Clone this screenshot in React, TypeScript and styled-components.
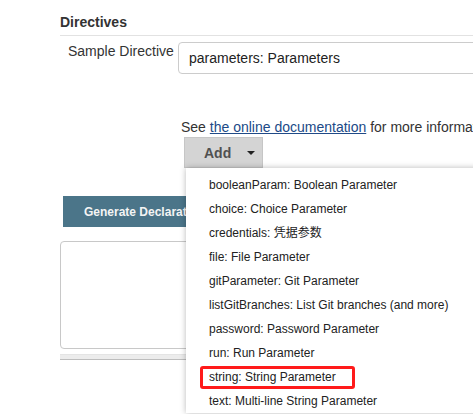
import React from "react";
import styled, { createGlobalStyle } from "styled-components";

const GlobalStyle = createGlobalStyle`
  html, body {
    margin: 0;
    padding: 0;
    background: #ffffff;
  }
  body {
    font-family: "Liberation Sans", Arial, "Noto Sans CJK SC", sans-serif;
    color: #333333;
    overflow: hidden;
  }
`;

const Page = styled.div`
  position: relative;
  width: 473px;
  height: 414px;
  overflow: hidden;
  padding-left: 60px;
  box-sizing: border-box;
`;

const Heading = styled.h3`
  margin: 12px -20px 0 0;
  padding-bottom: 3px;
  font-size: 14px;
  font-weight: bold;
  line-height: 20px;
  color: #333333;
  border-bottom: 1px solid #e2e2e2;
`;

const FieldRow = styled.div`
  display: flex;
  align-items: flex-start;
  padding-top: 6px;
`;

const Label = styled.label`
  box-sizing: border-box;
  width: 118px;
  flex: none;
  padding-left: 8px;
  font-size: 14px;
  line-height: 18px;
  color: #333333;
  white-space: nowrap;
`;

const SelectBox = styled.div`
  box-sizing: border-box;
  flex: none;
  width: 420px;
  height: 32px;
  display: flex;
  align-items: center;
  padding-left: 10px;
  border: 1px solid #cccccc;
  border-radius: 4px 0 0 4px;
  font-size: 14px;
  color: #222222;
  background: #ffffff;
`;

const Help = styled.div`
  margin-top: 43px;
  padding-left: 121px;
  font-size: 14px;
  line-height: 20px;
  color: #333333;
  white-space: nowrap;
`;

const DocLink = styled.a`
  color: #204a87;
  text-decoration: underline;
`;

const AddWrap = styled.div`
  position: relative;
  margin-left: 124px;
  width: 79px;
`;

const AddButton = styled.button`
  box-sizing: border-box;
  width: 79px;
  height: 31px;
  display: flex;
  align-items: center;
  padding: 0 0 0 19px;
  background: #d4d4d4;
  border: 1px solid #c6c6c6;
  border-radius: 0;
  font-family: "Liberation Sans", Arial, sans-serif;
  font-size: 14px;
  font-weight: bold;
  color: #505050;
  cursor: pointer;
`;

const Caret = styled.span`
  width: 0;
  height: 0;
  margin-left: 16px;
  margin-top: 1px;
  border-left: 4px solid transparent;
  border-right: 4px solid transparent;
  border-top: 4px solid #222222;
`;

const Menu = styled.ul`
  position: absolute;
  top: 31px;
  left: 2px;
  width: 320px;
  margin: 0;
  padding: 5px 0 0 0;
  list-style: none;
  background: #ffffff;
  box-shadow: 0 0 6px rgba(0, 0, 0, 0.28);
  z-index: 5;
`;

const MenuItem = styled.li`
  position: relative;
  padding-left: 23px;
  font-size: 12px;
  line-height: 24px;
  color: #222222;
  white-space: nowrap;
`;

const Highlight = styled.span`
  position: absolute;
  left: 14px;
  top: 1px;
  width: 155px;
  height: 23px;
  box-sizing: border-box;
  border: 3px solid #ff1a1a;
  border-radius: 3px;
`;

const GenerateButton = styled.button`
  display: block;
  box-sizing: border-box;
  margin: 28px 0 0 3px;
  height: 31px;
  padding: 0 21px;
  background: #4b7589;
  border: none;
  border-radius: 0;
  font-family: "Liberation Sans", Arial, sans-serif;
  font-size: 12px;
  font-weight: bold;
  color: #f4f4f4;
  white-space: nowrap;
`;

const OutputArea = styled.div`
  box-sizing: border-box;
  margin-top: 14px;
  height: 108px;
  width: 200px;
  border: 1px solid #c8c8c8;
  border-radius: 4px;
  background: #ffffff;
`;

const ResizeBar = styled.div`
  box-sizing: border-box;
  margin-top: 5px;
  width: 200px;
  height: 6px;
  background: #ececec;
  border-top: 1px solid #e4e4e4;
  border-bottom: 1px solid #bdbdbd;
`;

const items = [
  "booleanParam: Boolean Parameter",
  "choice: Choice Parameter",
  "credentials: 凭据参数",
  "file: File Parameter",
  "gitParameter: Git Parameter",
  "listGitBranches: List Git branches (and more)",
  "password: Password Parameter",
  "run: Run Parameter",
  "string: String Parameter",
  "text: Multi-line String Parameter",
];

export default function App() {
  return (
    <>
      <GlobalStyle />
      <Page>
        <Heading>Directives</Heading>
        <FieldRow>
          <Label>Sample Directive</Label>
          <SelectBox>parameters: Parameters</SelectBox>
        </FieldRow>
        <Help>
          See <DocLink href="#">the online documentation</DocLink> for more information
        </Help>
        <AddWrap>
          <AddButton>
            Add
            <Caret />
          </AddButton>
          <Menu>
            {items.map((label) => (
              <MenuItem key={label}>
                {label}
                {label.startsWith("string:") && <Highlight />}
              </MenuItem>
            ))}
          </Menu>
        </AddWrap>
        <GenerateButton>Generate Declarative Directive</GenerateButton>
        <OutputArea />
        <ResizeBar />
      </Page>
    </>
  );
}
